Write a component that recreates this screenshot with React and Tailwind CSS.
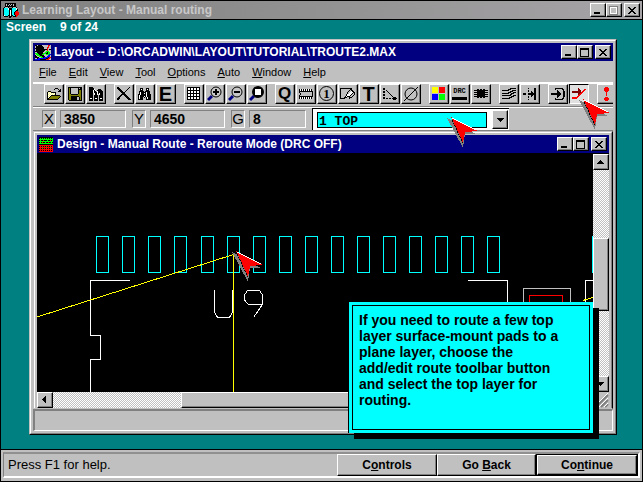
import { useState } from 'react'

const palette = {
  k: '#000000',
  w: '#ffffff',
  g: '#c0c0c0',
  d: '#808080',
  y: '#ffff80',
  o: '#808000',
  r: '#ff0000',
  m: '#800000',
  n: '#00ff00',
  c: '#00ffff',
  b: '#0000ff',
}

// one character per pixel, a dot is transparent
const Bitmap = ({ rows }) => {
  const width = Math.max(...rows.map((row) => row.length))
  return (
    <svg width={width} height={rows.length} shapeRendering="crispEdges" aria-hidden="true" className="shrink-0">
      {rows.map((row, y) =>
        row.split('').map((ch, x) => (ch === '.' ? null : <rect key={x + '-' + y} x={x} y={y} width="1" height="1" fill={palette[ch]} />))
      )}
    </svg>
  )
}

const icons = {
  app: [
    '..kkkkkkkkkkk...',
    '..kgkkgkgkgkk...',
    '..kgkgkgkkgkk...',
    '..kkkkkkkkkkk...',
    '.kgggk...kgggk..',
    'kccccwkkkccccw..',
    'kccccwkkkccccwk.',
    'kccccckwkcccckk.',
    'kccccckwkccckrr.',
    'kccccckwkcckrrrr',
    'kccccckwkcckrrrr',
    'kccccckwkcckrrrr',
    'kwccckkwkkcckrr.',
    '.kkkk.kkk.kkkr..',
    '......kk........',
  ],
  layout: [
    'kkgkkkkggggggrrg',
    'gkkkkkkkgggggrgg',
    'gkkkkkkkkgggrrgg',
    'kkkkkkkkkgggrggg',
    'gkkkkkkkkkkkrgkk',
    'gkkkkkkkkkggrggg',
    'kkkkkkkkkggnnngg',
    'ggkkkkkkggnnknng',
    'nnnkkkkknnnkknng',
    'gnnnkkknnggnnnbb',
    'kgnnnkkkkggggbbg',
    'kkggnnnkkkggbbbg',
    'kkkkggnnkbbbbkrr',
    'ggkbbbbbbbbkkrrg',
    'bbbbbkkkkkkrrrgg',
  ],
  design: [
    'kkkkkkkkkkkkkk',
    'knknknknknknkn',
    'nnnnnnnnnnnnnn',
    'knkkrkkknkkrkn',
    'nnnnnnnnnnnnnn',
    'knkrkknkkrkknk',
    'nnnnnnnnnnnnnn',
    'kkkkkkkkkkkkkk',
    'rrrrrrrrrrrrrr',
    'krkokrkokrkokr',
    'rrrrrrrrrrrrrr',
    'krkokrkokrkokr',
    'rrrrrrrrrrrrrr',
    'krkrkrkrkrkrkr',
    'rrrrrrrrrrrrrr',
  ],
  open: [
    '.........kkk...',
    '........k...k.k',
    '.............kk',
    '..kkk.......kkk',
    '.kywykkkkk.....',
    '.kwywywywk.....',
    '.kywywywyk.....',
    '.kwywkkkkkkkkk.',
    '.kywkoooooooook',
    '.kwkoooooooook.',
    '.kkoooooooook..',
    '.kkkkkkkkkkk...',
  ],
  save: [
    'kkkkkkkkkkkkkk',
    'kokgggggggkgkk',
    'kokgggggggkkkk',
    'kokgggggggkook',
    'kokgggggggkook',
    'kokgggggggkook',
    'kokgggggggkook',
    'kookkkkkkkoook',
    'kooooooooooook',
    'kookkkkkkkkook',
    'kookkkkkkggkok',
    'kookkkkkkggkok',
    'kookkkkkkggkok',
    '.kkkkkkkkkkkkk',
  ],
  library: [
    'kkkk..........',
    'kkkkk.........',
    'kkkkkw...kkk..',
    'kkkkwkw.kkkkk.',
    'kkkkwkk.wkkkkk',
    'kkkkwkkkwkkkkk',
    'kkkk.wkkwkwkkk',
    'kkkk.wkkw.wkkk',
    'kkkk.kkkk.kkkk',
    'kkkk.kkkk.kkkk',
    'kkkk.kkkk.kkkk',
    'kwwk.kwwk.kwwk',
    'kkkk.kkkk.kkkk',
    'kkkk.kkkk.kkkk',
  ],
  remove: [
    'kk..........k.',
    'kkk........k..',
    '.kkk......k...',
    '..kkk....k....',
    '...kkk..k.....',
    '....kkkk......',
    '.....kkk......',
    '....kkkkk.....',
    '...kk..kkk....',
    '..kk....kkk...',
    '.kk......kkk..',
    'kkk.......kkk.',
    'kk.........kkk',
  ],
  find: [
    '..kkk...kkk...',
    '..kwk...kwk...',
    '..kkk...kkk...',
    '.kkkkk.kkkkk..',
    '.kwkkkkkwkkk..',
    '.kwkkkwkwkkk..',
    'kkwkkkkkwkkkk.',
    'kwkkkkkkwkkkk.',
    'kwkkkkwkwkkkk.',
    'kwkkk.k.kwkkk.',
    'kwkkk...kwkkk.',
    'kkkkk...kkkkk.',
  ],
  grid: [
    'kkkkkkkkkkkkk',
    'kwwkwwkwwkwwk',
    'kwwkwwkwwkwwk',
    'kkkkkkkkkkkkk',
    'kwwkwwkwwkwwk',
    'kwwkwwkwwkwwk',
    'kkkkkkkkkkkkk',
    'kwwkwwkwwkwwk',
    'kwwkwwkwwkwwk',
    'kkkkkkkkkkkkk',
    'kwwkwwkwwkwwk',
    'kwwkwwkwwkwwk',
    'kkkkkkkkkkkkk',
  ],
  chip: [
    'kwkwkwkwkwkwk.',
    'kwkwkwkwkwkwk.',
    'kkkkkkkkkkkkkk',
    'k............k',
    '.k...........k',
    '.k...........k',
    'k............k',
    'kkkkkkkkkkkkkk',
    'kwkwkwkwkwkwk.',
    'kwkwkwkwkwkwk.',
  ],
  obstacle: [
    'kkkkkkkkkkkk...',
    'k.........kk...',
    'k........k.kk..',
    'k.......k..wkk.',
    'k......k..wwwkk',
    'k......k.wwwk.k',
    'k.....kwwwwk..k',
    'k.....kwwwk..k.',
    'k....kwkkk..k..',
    'k...kkk..kkk...',
    'kkkkk....k.....',
  ],
  connection: [
    'kk............',
    'kk............',
    '...k..........',
    'kk..k.........',
    'kk...k........',
    '......k.......',
    'kk.....k......',
    'kk......k.....',
    '.........k....',
    'kk........kkk.',
    'kk.kk.kk.kkkkk',
    '..........kkk.',
  ],
  ratsnest: [
    '...kk.kk.kk...',
    'kkkkkkkkkkkkkk',
    '...kkkkkkkk...',
    'kkkkkkkkkkkkkk',
    '...kkkkkkkk...',
    'kkkkkkkkkkkkkk',
    '...kkkkkkkk...',
    'kkkkkkkkkkkkkk',
    '...kk.kk.kk...',
  ],
  shove: [
    '........kkkkkk',
    '......kkk.....',
    'kkkkkkk...kkkk',
    '........kkk...',
    '......kkk..kkk',
    'kkkkkkk..kkk..',
    '........kk....',
    'kkkkkkkkk..kkk',
    '.........kkk..',
    '.......kkk....',
    'kkkkkkkk......',
  ],
  edit: [
    '.....k.....kk.',
    '...........kk.',
    '.....k.....kk.',
    '.....k..k..kk.',
    '........kk.kk.',
    'kkk..kkkkkkkk.',
    'kkk..kkkkkkkk.',
    '........kk.kk.',
    '.....k..k..kk.',
    '.....k.....kk.',
    '...........kk.',
    '.....k.....kk.',
  ],
  segment: [
    '....kkkkkkkk..',
    '....k......kk.',
    '......k.....k.',
    '......kk....kk',
    '......kkk...kk',
    'kkkkkkkkkk..kk',
    'kkkkkkkkkk..kk',
    '......kkk...kk',
    '......kk....kk',
    '......k.....k.',
    '....k......kk.',
    '....kkkkkkkk..',
  ],
  route: [
    '......m.......',
    '......mm....rr',
    '......mmm..rr.',
    'mmmmmmmmm.rr..',
    'mmmmmmmmmrr...',
    '......mmrr....',
    '......mrr.....',
    '......rr......',
    '.....rr.......',
    'rrrrrr........',
    'rrrrr.........',
  ],
  alert: [
    '.rrr.',
    'rrrrr',
    'rrrrr',
    'rrrrr',
    '.rrr.',
    '..r..',
    '..r..',
    '..r..',
    '..r..',
    '.....',
    '.rrr.',
    'rrrrr',
    'rrrrr',
    '.rrr.',
  ],
  close: [
    'kk....kk',
    '.kk..kk.',
    '..kkkk..',
    '...kk...',
    '..kkkk..',
    '.kk..kk.',
    'kk....kk',
  ],
}

const ZoomIcon = ({ kind }) => (
  <svg width="16" height="16" viewBox="0 0 16 16" aria-hidden="true">
    <path d="M1 14 5 10" stroke="#000080" strokeWidth="3" />
    {kind === 'all' ? (
      <>
        <circle cx="9" cy="6" r="6" fill="#000" />
        <rect x="6" y="3" width="6" height="6" fill="#fff" />
      </>
    ) : (
      <>
        <circle cx="9" cy="6" r="5" fill="#c8c8c8" stroke="#000" />
        <path d={kind === 'in' ? 'M6 6h6M9 3v6' : 'M6 6h6'} stroke="#000" strokeWidth="2" />
      </>
    )}
  </svg>
)

const ColorIcon = () => (
  <svg width="15" height="15" shapeRendering="crispEdges" aria-hidden="true">
    <rect x="1" y="1" width="6" height="6" fill="#ffff00" />
    <rect x="8" y="1" width="6" height="6" fill="#ff0000" />
    <rect x="1" y="8" width="6" height="6" fill="#0000ff" />
    <rect x="8" y="8" width="6" height="6" fill="#00ff00" />
  </svg>
)

const NullIcon = () => (
  <svg width="16" height="16" fill="none" stroke="#000" aria-hidden="true">
    <circle cx="8" cy="8" r="6" />
    <path d="M1 15 15 1" />
  </svg>
)

const toolGroups = [
  [
    { name: 'Open', icon: <Bitmap rows={icons.open} /> },
    { name: 'Save', icon: <Bitmap rows={icons.save} /> },
    { name: 'Library manager', icon: <Bitmap rows={icons.library} /> },
  ],
  [
    { name: 'Delete', icon: <Bitmap rows={icons.remove} /> },
    { name: 'Find', icon: <Bitmap rows={icons.find} /> },
    { name: 'Edit', icon: <span className="text-[20px] font-black leading-4">E</span> },
  ],
  [
    { name: 'Spreadsheet', icon: <Bitmap rows={icons.grid} /> },
    { name: 'Zoom in', icon: <ZoomIcon kind="in" /> },
    { name: 'Zoom out', icon: <ZoomIcon kind="out" /> },
    { name: 'Zoom all', icon: <ZoomIcon kind="all" /> },
  ],
  [
    { name: 'Query', icon: <span className="text-[17px] font-bold leading-4">Q</span> },
    { name: 'Component', icon: <Bitmap rows={icons.chip} /> },
    { name: 'Pin', icon: <span className="w-[15px] h-[15px] rounded-full border border-black text-[13px] leading-[13px] font-bold text-center font-['Liberation_Serif',serif]">1</span> },
    { name: 'Obstacle', icon: <Bitmap rows={icons.obstacle} /> },
    { name: 'Text', icon: <span className="text-[20px] font-black leading-4">T</span> },
    { name: 'Connection', icon: <Bitmap rows={icons.connection} /> },
    { name: 'Error', icon: <NullIcon /> },
  ],
  [
    { name: 'Color', icon: <ColorIcon /> },
    { name: 'Online DRC', icon: <span className="w-[15px] border-b-3 border-black pb-[2px] text-[7px] leading-[7px] font-bold text-center font-['Liberation_Mono',monospace]">DRC</span> },
    { name: 'Reconnect', icon: <Bitmap rows={icons.ratsnest} /> },
  ],
  [
    { name: 'Shove track', icon: <Bitmap rows={icons.shove} /> },
    { name: 'Edit segment', icon: <Bitmap rows={icons.edit} /> },
  ],
  [
    { name: 'Auto path', icon: <Bitmap rows={icons.segment} /> },
    { name: 'Add/edit route', icon: <Bitmap rows={icons.route} />, pressed: true },
  ],
  [{ name: 'Design check', icon: <Bitmap rows={icons.alert} /> }],
]

const menus = ['File', 'Edit', 'View', 'Tool', 'Options', 'Auto', 'Window', 'Help']

const pads = [59, 85, 111, 137, 164, 190, 216, 242, 268, 294, 320, 346, 372, 398, 424, 450, 555]

const raised = 'bg-[#c0c0c0] border border-t-white border-l-white border-r-black border-b-black shadow-[inset_-1px_-1px_0_#808080]'

const WindowButtons = ({ grayed }) => (
  <div className="flex shrink-0">
    <button aria-label="Minimize" className={raised + ' w-4 h-[14px] flex items-end pl-[3px] pb-[2px]'}>
      <span className="w-[6px] h-[2px] bg-black" />
    </button>
    <button aria-label="Maximize" className={raised + ' w-4 h-[14px] flex items-center pl-[2px]'}>
      <span className={grayed ? 'w-[9px] h-[9px] border-2 border-white outline outline-[#808080] -outline-offset-1' : 'w-[9px] h-[9px] border border-t-2 border-black'} />
    </button>
    <button aria-label="Close" className={raised + ' w-4 h-[14px] ml-[2px] flex items-center pl-[3px]'}>
      <Bitmap rows={icons.close} />
    </button>
  </div>
)

const ToolButton = ({ name, icon, pressed }) => (
  <button
    aria-label={name}
    aria-pressed={pressed}
    className={
      'w-5 h-5 shrink-0 flex items-center justify-center overflow-hidden pr-px pb-px ' +
      (pressed ? 'bg-[#e0e0e0] border border-t-black border-l-black border-r-white border-b-white' : raised)
    }
  >
    {icon}
  </button>
)

const Coordinate = ({ letter, value, onChange, width }) => (
  <div className="flex gap-[4px] items-center">
    <label htmlFor={'coord' + letter} className="w-[14px] h-[18px] border border-t-[#808080] border-l-[#808080] border-r-white border-b-white text-[15px] leading-4 text-center flex justify-center">
      {letter}
    </label>
    <input
      id={'coord' + letter}
      value={value}
      onChange={onChange}
      className={width + ' h-[18px] bg-transparent border border-t-[#808080] border-l-[#808080] border-r-white border-b-white pl-[3px] text-[14px] leading-4 font-bold'}
    />
  </div>
)

const ScrollButton = ({ label, path }) => (
  <button aria-label={label} className={raised + ' w-4 h-4 shrink-0 flex items-center justify-center'}>
    <svg width="8" height="8" shapeRendering="crispEdges" aria-hidden="true">
      <path d={path} />
    </svg>
  </button>
)

const Pointer = ({ className }) => (
  <svg width="34" height="34" className={'absolute z-20 ' + className} shapeRendering="crispEdges" aria-hidden="true">
    <path d="M0 1 16 31 18 17 29 17Z" fill="#808080" />
    <path d="M4 0 31 14 18 15 16 26Z" fill="#ff0000" />
    <path d="M5 1 29 13" stroke="#fff" />
    <path d="M5 3 16 26" stroke="#000" strokeDasharray="2 1" />
  </svg>
)

const Board = () => (
  <svg className="block w-full h-full" fill="none" shapeRendering="crispEdges" role="img" aria-label="Board routing">
    {pads.map((x) => (
      <rect key={x} x={x + 0.5} y="82.5" width="12" height="36" stroke="#00ffff" />
    ))}
    <path d="M93 126.5H53.5V181.5H63.5V205.5H53.5V240M431 126.5H470.5V240M548.5 240V126.5H560" stroke="#fff" />
    <path d="M177.5 136V158L180.5 163.5H192.5L195.5 158V136" stroke="#fff" />
    <path d="M225.5 150.5H211.5L207.5 146V141L210.5 136.5H222.5L225.5 141V150.5L216.5 163.5" stroke="#fff" />
    <path d="M486.5 180V134.5H533.5V180" stroke="#c0c0c0" />
    <path d="M492.5 180V141.5H525.5V180" stroke="#ff0000" />
    <path d="M0 163 196.5 100.5V240M546 146.5 560 142" stroke="#ffff00" />
  </svg>
)

const track = 'bg-[repeating-conic-gradient(#fff_0_25%,#c0c0c0_0_50%)] bg-[length:2px_2px]'

const DesignWindow = () => (
  <section className="flex-1 min-h-0 border border-[#c0c0c0] border-r-black">
    <div className="h-full flex flex-col border border-t-white border-l-white border-r-[#808080] border-b-0 p-[2px] pb-0">
      <div className="h-[18px] shrink-0 bg-[#000080] flex items-center px-[2px] gap-1">
        <Bitmap rows={icons.design} />
        <h2 className="flex-1 text-white text-[12px] leading-4 font-bold whitespace-nowrap">Design - Manual Route - Reroute Mode (DRC OFF)</h2>
        <WindowButtons />
      </div>
      <div className="flex-1 min-h-0 flex border-t border-black">
        <div className="flex-1 min-w-0 bg-black overflow-hidden">
          <Board />
        </div>
        <div className={track + ' w-4 flex flex-col'}>
          <ScrollButton label="Scroll up" path="M3 2h1v1h1v1h1v1h1v1H0V5h1V4h1V3h1z" />
          <div className="flex-[68]" />
          <div className={raised + ' flex-[72]'} />
          <div className="flex-[65]" />
          <ScrollButton label="Scroll down" path="M0 2h7v1H6v1H5v1H4v1H3V5H2V4H1V3H0z" />
        </div>
      </div>
      <div className="h-4 shrink-0 flex">
        <div className={track + ' flex-1 flex'}>
          <ScrollButton label="Scroll left" path="M5 0v7H4V6H3V5H2V4H1V3h1V2h1V1h1V0z" />
          <div className="flex-[128]" />
          <div className={raised + ' flex-[260]'} />
          <div className="flex-[135]" />
          <ScrollButton label="Scroll right" path="M2 0v7h1V6h1V5h1V4h1V3H5V2H4V1H3V0z" />
        </div>
        <svg width="16" height="16" aria-hidden="true">
          <path d="M3 15 15 3M8 15 15 8M12 15 15 12" stroke="#808080" strokeWidth="2" />
          <path d="M2 14 15 1M6 15 15 6M11 15 15 11" stroke="#fff" />
        </svg>
      </div>
    </div>
  </section>
)

const App = () => {
  const [coords, setCoords] = useState({ X: '3850', Y: '4650', G: '8' })
  const [layer, setLayer] = useState('top')

  const handleCoord = (key) => (e) => setCoords({ ...coords, [key]: e.target.value })

  return (
    <div className="h-screen flex flex-col overflow-hidden border border-black bg-[#c0c0c0] text-black font-['Liberation_Sans',Arial,sans-serif]">
      <header className="h-[19px] shrink-0 flex items-center gap-[3px] px-[2px] border-b border-black bg-linear-to-r from-[#808080] to-[#a6a4a6]">
        <Bitmap rows={icons.app} />
        <h1 className="flex-1 text-[#c8c8c8] text-[12px] leading-4 font-bold whitespace-nowrap">Learning Layout - Manual routing</h1>
        <WindowButtons grayed />
      </header>

      <main className="relative flex-1 min-h-0 flex flex-col bg-[#008080] pl-7 pr-[25px] pb-[14px]">
        <p className="h-[19px] shrink-0 -ml-[23px] flex gap-[14px] text-white text-[12px] leading-[15px] font-bold">
          <span>Screen</span>
          <span>9 of 24</span>
        </p>

        <div className="flex-1 min-h-0 border border-t-[#c0c0c0] border-l-[#c0c0c0] border-r-black border-b-black">
          <div className="h-full flex flex-col bg-[#c0c0c0] border border-t-white border-l-white border-r-[#808080] border-b-[#808080] p-[2px]">
            <div className="h-[18px] shrink-0 flex items-center gap-[3px] px-[2px] bg-[#000080]">
              <Bitmap rows={icons.layout} />
              <h2 className="flex-1 text-white text-[12px] leading-4 font-bold whitespace-nowrap">Layout -- D:\ORCADWIN\LAYOUT\TUTORIAL\TROUTE2.MAX</h2>
              <WindowButtons />
            </div>

            <nav className="h-[21px] shrink-0 flex items-center gap-3 pl-[6px] text-[11px] leading-4">
              {menus.map((menu) => (
                <button key={menu}>
                  <span className="underline">{menu[0]}</span>{menu.slice(1)}
                </button>
              ))}
            </nav>

            <div className="h-6 shrink-0 flex gap-2 border-t-2 border-white pl-[11px] overflow-hidden">
              {toolGroups.map((group, i) => (
                <div key={i} className="flex gap-px">
                  {group.map((tool) => (
                    <ToolButton key={tool.name} {...tool} />
                  ))}
                </div>
              ))}
            </div>

            <div className="h-[25px] shrink-0 border-t border-b border-[#808080]">
              <div className="h-full flex items-center border-t border-white pl-[9px] gap-[6px]">
                <Coordinate letter="X" value={coords.X} onChange={handleCoord('X')} width="w-[66px]" />
                <Coordinate letter="Y" value={coords.Y} onChange={handleCoord('Y')} width="w-[75px]" />
                <Coordinate letter="G" value={coords.G} onChange={handleCoord('G')} width="w-[57px]" />
                <div className="h-[22px] flex items-center bg-white border-t border-l border-black pl-1 pr-px">
                  <select
                    aria-label="Layer"
                    value={layer}
                    onChange={(e) => setLayer(e.target.value)}
                    className="appearance-none w-[170px] h-[16px] bg-[#00ffff] border border-black pl-px pt-px text-[13px] leading-[16px] font-bold whitespace-pre font-['Liberation_Mono',monospace]"
                  >
                    <option value="top">1 TOP</option>
                    <option value="bottom">2 BOT</option>
                  </select>
                  <button aria-label="Show layers" className={raised + ' w-4 h-[19px] ml-[5px] flex items-center justify-center'}>
                    <svg width="7" height="4" shapeRendering="crispEdges" aria-hidden="true">
                      <path d="M0 0h7v1H6v1H5v1H4v1H3V3H2V2H1V1H0z" />
                    </svg>
                  </button>
                </div>
              </div>
            </div>

            <DesignWindow />

            <div className="h-[22px] shrink-0 border-t-2 border-l-2 border-r border-b border-t-[#808080] border-l-[#808080] border-r-white border-b-white" />
          </div>
        </div>

        <aside className="absolute z-10 right-[49px] bottom-[16px] w-[245px] h-[131px] bg-[#00ffff] border-l border-black p-[3px] shadow-[6px_6px_0_#000]">
          <p className="h-full border border-black px-[6px] py-[6px] text-[14px] leading-4 font-bold">
            If you need to route a few top<br />
            layer surface-mount pads to a<br />
            plane layer, choose the<br />
            add/edit route toolbar button<br />
            and select the top layer for<br />
            routing.
          </p>
        </aside>

        <Pointer className="left-[446px] top-[97px]" />
        <Pointer className="left-[578px] top-[79px]" />
        <Pointer className="left-[231px] top-[231px]" />
      </main>

      <footer className="h-8 shrink-0 border-t border-black p-[2px]">
        <div className="h-[26px] flex items-center border-t-2 border-l border-t-[#909090] border-l-[#808080] border-b-2 border-r-2 border-b-white border-r-white">
          <p className="flex-1 pl-1 text-[13px] leading-4">Press F1 for help.</p>
          <div className="flex text-[12px] leading-4 font-bold">
            <button className={raised + ' w-[100px] h-[22px]'}>C<u>o</u>ntrols</button>
            <button className={raised + ' w-[99px] h-[22px]'}>Go <u>B</u>ack</button>
            <div className="border border-black bg-black">
              <button className={raised + ' block w-[100px] h-5'}>Co<u>n</u>tinue</button>
            </div>
          </div>
        </div>
      </footer>
    </div>
  )
}

export default App
